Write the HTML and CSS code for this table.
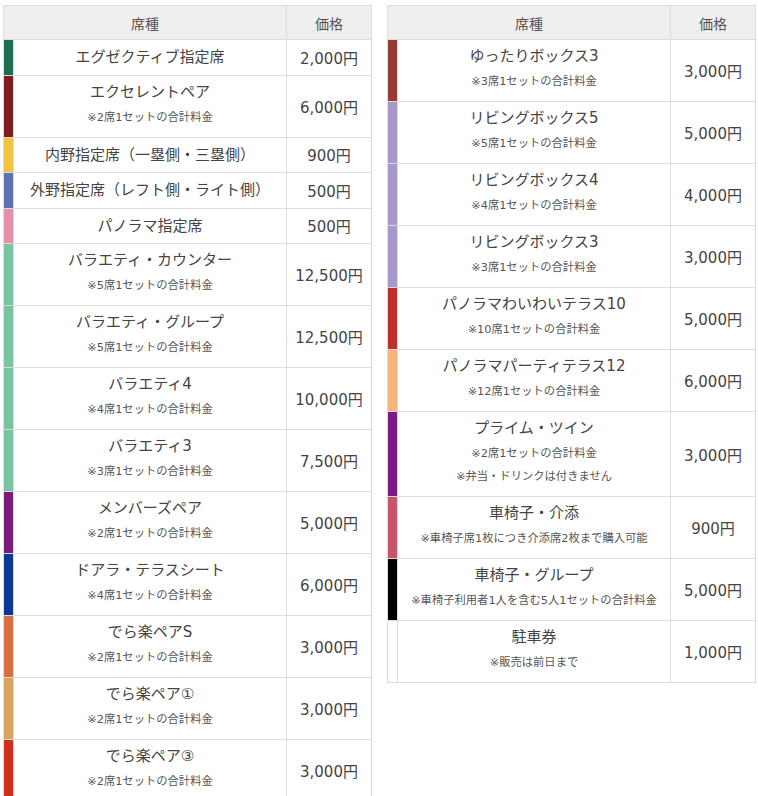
FILE: index.html
```html
<!DOCTYPE html>
<html lang="ja">
<head>
<meta charset="utf-8">
<title>席種・価格</title>
<link rel="stylesheet" href="styles.css">
</head>
<body>
<div class="wrap">
  <table class="seats">
    <colgroup><col class="c-color"><col class="c-name"><col class="c-price"></colgroup>
    <thead>
      <tr><th colspan="2">席種</th><th>価格</th></tr>
    </thead>
    <tbody>
      <tr class="single"><td class="bar exec"></td><td class="name"><div class="main">エグゼクティブ指定席</div></td><td class="price">2,000円</td></tr>
      <tr><td class="bar excellent"></td><td class="name"><div class="main">エクセレントペア</div><div class="sub">※2席1セットの合計料金</div></td><td class="price">6,000円</td></tr>
      <tr class="single"><td class="bar infield"></td><td class="name"><div class="main">内野指定席（一塁側・三塁側）</div></td><td class="price">900円</td></tr>
      <tr class="single"><td class="bar outfield"></td><td class="name"><div class="main">外野指定席（レフト側・ライト側）</div></td><td class="price">500円</td></tr>
      <tr class="single"><td class="bar panorama"></td><td class="name"><div class="main">パノラマ指定席</div></td><td class="price">500円</td></tr>
      <tr><td class="bar variety"></td><td class="name"><div class="main">バラエティ・カウンター</div><div class="sub">※5席1セットの合計料金</div></td><td class="price">12,500円</td></tr>
      <tr><td class="bar variety"></td><td class="name"><div class="main">バラエティ・グループ</div><div class="sub">※5席1セットの合計料金</div></td><td class="price">12,500円</td></tr>
      <tr><td class="bar variety"></td><td class="name"><div class="main">バラエティ4</div><div class="sub">※4席1セットの合計料金</div></td><td class="price">10,000円</td></tr>
      <tr><td class="bar variety"></td><td class="name"><div class="main">バラエティ3</div><div class="sub">※3席1セットの合計料金</div></td><td class="price">7,500円</td></tr>
      <tr><td class="bar members"></td><td class="name"><div class="main">メンバーズペア</div><div class="sub">※2席1セットの合計料金</div></td><td class="price">5,000円</td></tr>
      <tr><td class="bar doala"></td><td class="name"><div class="main">ドアラ・テラスシート</div><div class="sub">※4席1セットの合計料金</div></td><td class="price">6,000円</td></tr>
      <tr><td class="bar deras"></td><td class="name"><div class="main">でら楽ペアS</div><div class="sub">※2席1セットの合計料金</div></td><td class="price">3,000円</td></tr>
      <tr><td class="bar dera1"></td><td class="name"><div class="main">でら楽ペア①</div><div class="sub">※2席1セットの合計料金</div></td><td class="price">3,000円</td></tr>
      <tr><td class="bar dera3"></td><td class="name"><div class="main">でら楽ペア③</div><div class="sub">※2席1セットの合計料金</div></td><td class="price">3,000円</td></tr>
    </tbody>
  </table>

  <table class="seats">
    <colgroup><col class="c-color"><col class="c-name"><col class="c-price"></colgroup>
    <thead>
      <tr><th colspan="2">席種</th><th>価格</th></tr>
    </thead>
    <tbody>
      <tr><td class="bar yuttari"></td><td class="name"><div class="main">ゆったりボックス3</div><div class="sub">※3席1セットの合計料金</div></td><td class="price">3,000円</td></tr>
      <tr><td class="bar living"></td><td class="name"><div class="main">リビングボックス5</div><div class="sub">※5席1セットの合計料金</div></td><td class="price">5,000円</td></tr>
      <tr><td class="bar living"></td><td class="name"><div class="main">リビングボックス4</div><div class="sub">※4席1セットの合計料金</div></td><td class="price">4,000円</td></tr>
      <tr><td class="bar living"></td><td class="name"><div class="main">リビングボックス3</div><div class="sub">※3席1セットの合計料金</div></td><td class="price">3,000円</td></tr>
      <tr><td class="bar waiwai"></td><td class="name"><div class="main">パノラマわいわいテラス10</div><div class="sub">※10席1セットの合計料金</div></td><td class="price">5,000円</td></tr>
      <tr><td class="bar party"></td><td class="name"><div class="main">パノラマパーティテラス12</div><div class="sub">※12席1セットの合計料金</div></td><td class="price">6,000円</td></tr>
      <tr><td class="bar prime"></td><td class="name"><div class="main">プライム・ツイン</div><div class="sub first">※2席1セットの合計料金</div><div class="sub">※弁当・ドリンクは付きません</div></td><td class="price">3,000円</td></tr>
      <tr><td class="bar kaizoe"></td><td class="name"><div class="main">車椅子・介添</div><div class="sub">※車椅子席1枚につき介添席2枚まで購入可能</div></td><td class="price">900円</td></tr>
      <tr><td class="bar wgroup"></td><td class="name"><div class="main">車椅子・グループ</div><div class="sub">※車椅子利用者1人を含む5人1セットの合計料金</div></td><td class="price">5,000円</td></tr>
      <tr><td class="bar parking"></td><td class="name"><div class="main">駐車券</div><div class="sub">※販売は前日まで</div></td><td class="price">1,000円</td></tr>
    </tbody>
  </table>
</div>
</body>
</html>
```

FILE: styles.css
```css
html, body {
  margin: 0;
  padding: 0;
  background: #fff;
}

body {
  font-family: "DejaVu Sans", "Noto Sans CJK JP", sans-serif;
  color: #444;
}

.wrap {
  display: flex;
  align-items: flex-start;
  gap: 15px;
  padding: 5px 0 0 3px;
}

.seats {
  width: 368px;
  table-layout: fixed;
  border-collapse: collapse;
  border: 1px solid #dcdcdc;
}

.c-color { width: 10px; }
.c-name { width: 273px; }
.c-price { width: 85px; }

.seats th,
.seats td {
  border: 1px solid #dcdcdc;
  padding: 0;
  vertical-align: middle;
  text-align: center;
}

.seats th {
  background: #efefef;
  font-weight: normal;
  font-size: 14px;
  color: #555;
  height: 33px;
}

.seats .name {
  padding: 4px 4px 2px;
}

.main {
  font-size: 15px;
  line-height: 24px;
  white-space: nowrap;
}

.sub {
  font-size: 11.3px;
  line-height: 24px;
  color: #555;
  margin-top: 2px;
  margin-bottom: 5px;
  white-space: nowrap;
}

.sub.first {
  margin-bottom: 0;
}

.sub.first + .sub {
  margin-top: -1px;
}

.seats .single .name {
  height: 34.5px;
  padding: 0 4px;
}

.price {
  font-size: 15px;
  color: #444;
}

.bar.exec { background: #1d6e4f; }
.bar.excellent { background: #7e1c1f; }
.bar.infield { background: #f2c444; }
.bar.outfield { background: #6072b3; }
.bar.panorama { background: #e58fa8; }
.bar.variety { background: #79c4a1; }
.bar.members { background: #7c1a7b; }
.bar.doala { background: #0b3796; }
.bar.deras { background: #da7040; }
.bar.dera1 { background: #d9a461; }
.bar.dera3 { background: #d12f1c; }

.bar.yuttari { background: #973a33; }
.bar.living { background: #a897c9; }
.bar.waiwai { background: #bf2f2c; }
.bar.party { background: #f6b679; }
.bar.prime { background: #7a1a87; }
.bar.kaizoe { background: #c7546a; }
.bar.wgroup { background: #000; }
.bar.parking { background: #fff; }
```
